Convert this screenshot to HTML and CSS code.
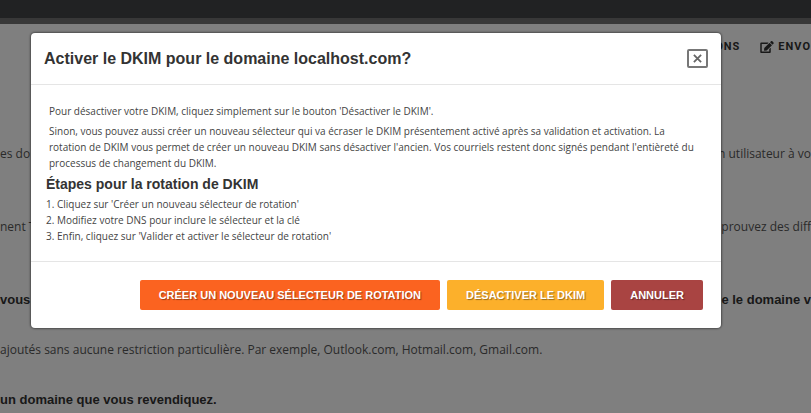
FILE: index.html
```
<!DOCTYPE html>
<html lang="fr">
<head>
    <meta charset="UTF-8">
    <meta name="viewport" content="width=device-width, initial-scale=1.0">
    <title>Activer le DKIM</title>
    <link rel="stylesheet" href="styles.css">
</head>
<body>
    <div class="page">
        <div class="topbar"></div>
        <nav class="nav">
            <a href="#">ONS</a>
            <a href="#">
                <svg class="icon" viewBox="0 0 576 512" aria-hidden="true"><path d="M402.600 83.200l90.200 90.200c3.800 3.800 3.800 10 0 13.800L274.400 405.600l-92.800 10.300c-12.400 1.400-22.900-9.100-21.500-21.500l10.300-92.800L388.800 83.200c3.800-3.800 10-3.800 13.800 0zm162-22.900l-48.800-48.800c-15.200-15.200-39.900-15.200-55.200 0l-35.400 35.400c-3.800 3.800-3.800 10 0 13.800l90.200 90.200c3.800 3.800 10 3.800 13.800 0l35.400-35.400c15.200-15.300 15.200-40 0-55.200zM384 346.200V448H64V128h229.800c3.200 0 6.200-1.300 8.500-3.500l40-40c7.600-7.600 2.200-20.500-8.500-20.500H48C21.500 64 0 85.500 0 112v352c0 26.500 21.500 48 48 48h352c26.500 0 48-21.500 48-48V306.200c0-10.700-12.900-16-20.500-8.500l-40 40c-2.200 2.300-3.500 5.300-3.500 8.500z"/></svg>
                ENVO
            </a>
        </nav>
        <div class="content">
            <div class="row tall"><span>es do</span><span>n utilisateur à vo</span></div>
            <div class="row tall"><span>nent T</span><span>prouvez des diff</span></div>
            <div class="row bold"><span>vous</span><span>ue le domaine v</span></div>
            <div class="row">ajoutés sans aucune restriction particulière. Par exemple, Outlook.com, Hotmail.com, Gmail.com.</div>
            <div class="row bold">un domaine que vous revendiquez.</div>
        </div>
    </div>

    <div class="overlay">
        <div class="modal" role="dialog" aria-labelledby="modal-title">
            <div class="modal-header">
                <h3 id="modal-title">Activer le DKIM pour le domaine localhost.com?</h3>
                <button class="close" type="button" aria-label="Fermer">
                    <svg viewBox="0 0 10 10" aria-hidden="true"><path d="M1 1l8 8M9 1l-8 8"/></svg>
                </button>
            </div>
            <div class="modal-body">
                <p>Pour désactiver votre DKIM, cliquez simplement sur le bouton 'Désactiver le DKIM'.</p>
                <p>Sinon, vous pouvez aussi créer un nouveau sélecteur qui va écraser le DKIM présentement activé après sa validation et activation. La rotation de DKIM vous permet de créer un nouveau DKIM sans désactiver l'ancien. Vos courriels restent donc signés pendant l'entièreté du processus de changement du DKIM.</p>
                <h4>Étapes pour la rotation de DKIM</h4>
                <ol>
                    <li>Cliquez sur 'Créer un nouveau sélecteur de rotation'</li>
                    <li>Modifiez votre DNS pour inclure le sélecteur et la clé</li>
                    <li>Enfin, cliquez sur 'Valider et activer le sélecteur de rotation'</li>
                </ol>
            </div>
            <div class="modal-footer">
                <button class="btn btn-primary" type="button">Créer un nouveau sélecteur de rotation</button>
                <button class="btn btn-warning" type="button">Désactiver le DKIM</button>
                <button class="btn btn-danger" type="button">Annuler</button>
            </div>
        </div>
    </div>
</body>
</html>
```
FILE: styles.css
```
* {
    box-sizing: border-box;
}

body {
    margin: 0;
    background-color: #fff;
    font-family: "Liberation Sans", Arial, sans-serif;
    color: #555;
}

.topbar {
    height: 24px;
    background-color: #434547;
    border-bottom: 6px solid #707070;
}

.nav {
    display: flex;
    justify-content: flex-end;
    gap: 20px;
    height: 46px;
    align-items: center;
}

.nav a {
    display: flex;
    align-items: center;
    gap: 4px;
    color: #333;
    font: bold 11px/16px Roboto, sans-serif;
    letter-spacing: 1px;
    text-decoration: none;
}

.icon {
    width: 14px;
    height: 12px;
    fill: #333;
}

.content {
    padding-top: 74px;
    font-size: 12px;
    line-height: 20px;
    font-family: "Open Sans", sans-serif;
}

.row {
    display: flex;
    justify-content: space-between;
    margin-bottom: 30px;
    white-space: nowrap;
}

.row:last-child {
    margin-bottom: 0;
}

.tall {
    margin-bottom: 53px;
}

.bold {
    color: #333;
    font-weight: bold;
    font-size: 13px;
    font-family: "Liberation Sans", Arial, sans-serif;
}

.overlay {
    position: absolute;
    inset: 0;
    padding: 33px 90px 0 31px;
    background-color: rgba(0, 0, 0, 0.5);
}

.modal {
    background-color: #fff;
    border-radius: 4px;
    box-shadow: 0 0 2px 1px rgba(0, 0, 0, 0.4);
}

.modal-header {
    display: flex;
    justify-content: space-between;
    align-items: center;
    height: 52px;
    padding: 0 13px;
    border-bottom: 1px solid #e5e5e5;
}

h3 {
    margin: 0;
    font-size: 16px;
    color: #333;
}

.close {
    display: flex;
    align-items: center;
    justify-content: center;
    width: 21px;
    height: 19px;
    padding: 0;
    border: 2px solid #777;
    border-radius: 2px;
    background-color: #fff;
}

.close svg {
    width: 9px;
    height: 9px;
    fill: none;
    stroke: #666;
    stroke-width: 2;
}

.modal-body {
    padding: 18px 15px 17px;
    color: #444;
    font: 10px/16px "Open Sans", sans-serif;
}

.modal-body p {
    margin: 0 3px 4px;
}

h4 {
    margin: 4px 0 3px;
    font: bold 14px/18px "Liberation Sans", Arial, sans-serif;
    color: #333;
}

ol {
    margin: 0;
    padding: 0;
    list-style-position: inside;
}

.modal-footer {
    display: flex;
    justify-content: flex-end;
    gap: 7px;
    padding: 18px;
    border-top: 1px solid #e5e5e5;
}

.btn {
    height: 30px;
    padding: 0 19px;
    border: none;
    border-radius: 2px;
    color: #fff;
    font: bold 11px/16px "Liberation Sans", Arial, sans-serif;
    text-transform: uppercase;
    text-shadow: 1px 1px 1px rgba(0, 0, 0, 0.4);
    cursor: pointer;
}

.btn-primary {
    background-color: #fb6320;
}

.btn-warning {
    background-color: #fcb02b;
}

.btn-danger {
    background-color: #a94442;
}
```
